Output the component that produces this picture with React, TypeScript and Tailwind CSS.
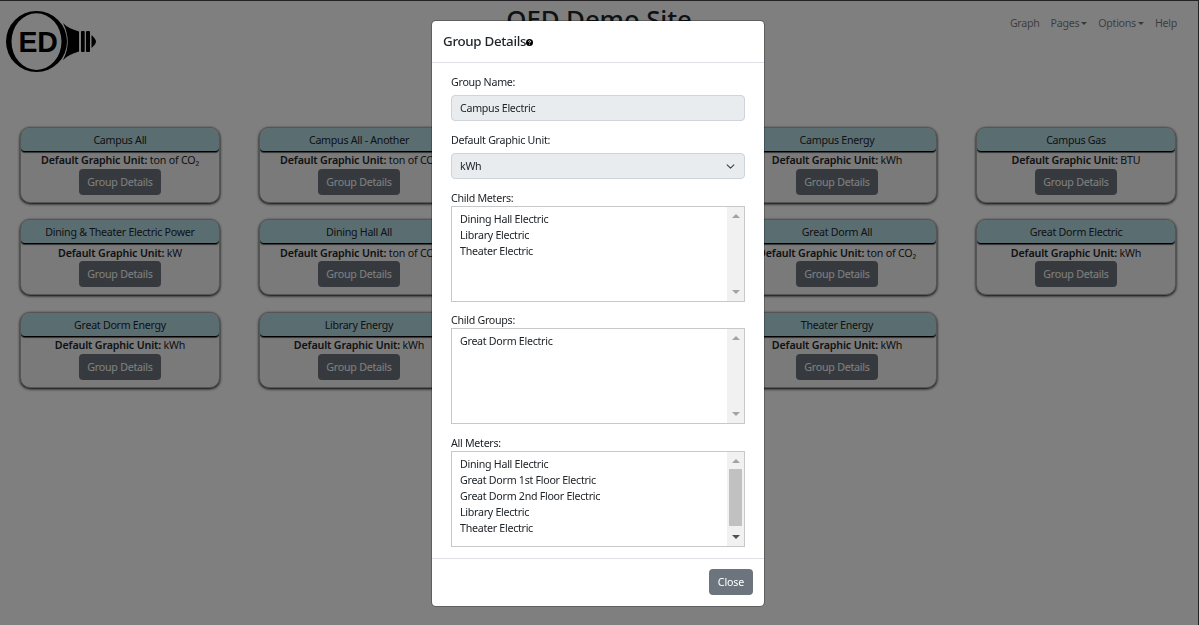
import React from "react";

type Group = { name: string; unit: string } | null;

const groups: Group[] = [
  { name: "Campus All", unit: "ton of CO₂" },
  { name: "Campus All - Another", unit: "ton of CO₂" },
  null,
  { name: "Campus Energy", unit: "kWh" },
  { name: "Campus Gas", unit: "BTU" },
  { name: "Dining & Theater Electric Power", unit: "kW" },
  { name: "Dining Hall All", unit: "ton of CO₂" },
  null,
  { name: "Great Dorm All", unit: "ton of CO₂" },
  { name: "Great Dorm Electric", unit: "kWh" },
  { name: "Great Dorm Energy", unit: "kWh" },
  { name: "Library Energy", unit: "kWh" },
  null,
  { name: "Theater Energy", unit: "kWh" },
];

function Logo() {
  return (
    <svg className="ml-[5px] mt-[9px] h-[62px] w-[91px]" viewBox="0 0 91 62">
      <path
        fillRule="evenodd"
        d="M31.500 1a30.500 30.500 0 1 0 0 61a30.500 30.500 0 1 0 0-61ZM31.500 3.300a25 28.300 0 1 1 0 56.600a25 28.300 0 1 1 0-56.600Z"
      />
      <path d="M58 13Q63 18.500 74 21.500V41.500Q63 44.500 58 50Q67.500 32 58 13Z" />
      <rect x="76" y="21" width="3.700" height="21" rx="1" />
      <rect x="81" y="21" width="4" height="21" rx="1" />
      <path d="M86.500 25Q91 29 91 31.500Q91 34 86.500 38Z" />
      <text x="13.500" y="41.500" fontFamily="Liberation Sans" fontWeight="700" fontSize="29" textLength="39" lengthAdjust="spacingAndGlyphs">
        ED
      </text>
    </svg>
  );
}

function Caret() {
  return <span className="mb-[2px] ml-[2px] inline-block border-x-[3px] border-t-[3px] border-x-transparent border-t-current align-middle" />;
}

function Card({ group }: { group: Group }) {
  if (!group) return <div />;
  return (
    <div className="h-[76px] w-[200px] overflow-hidden rounded-[10px] border border-[#aaa] bg-[#f4f4f4] text-center text-[#212529] shadow-[0_1px_3px_#000]">
      <div className="h-[24.4px]">
        <div className="h-[24px] rounded-b-[4px] border-b border-black bg-[#b5dce4] leading-[24px] shadow-[0_1px_1px_#666]">{group.name}</div>
      </div>
      <div className="h-[16.6px] leading-[17px]">
        <b className="font-semibold tracking-[-0.14px]">Default Graphic Unit:</b> <span className="tracking-[-0.2px]">{group.unit}</span>
      </div>
      <button className="mx-auto block h-[26px] w-[82px] rounded-[4px] bg-[#6c757d] tracking-[-0.25px] text-white">Group Details</button>
    </div>
  );
}

function ListBox({ label, items, scroll }: { label: string; items: string[]; scroll?: boolean }) {
  return (
    <div>
      <div className="h-[16px] leading-[16px]">{label}</div>
      <div className="flex h-[96px] justify-between border border-[#c8c8c8]">
        <ul className="pl-[8px] pt-[4px]">
          {items.map((i) => (
            <li key={i} className="h-[16px] leading-[16px]">{i}</li>
          ))}
        </ul>
        <div className="flex w-[17px] flex-col items-center justify-between bg-[#f1f1f1] py-[7px]">
          <span className="border-x-[4px] border-b-[4px] border-x-transparent border-b-[#a3a3a3]" />
          {scroll && <span className="mb-[3px] h-[57px] w-[13px] bg-[#c1c1c1]" />}
          <span className={scroll ? "border-x-[4px] border-t-[4px] border-x-transparent border-t-[#505050]" : "border-x-[4px] border-t-[4px] border-x-transparent border-t-[#a3a3a3]"} />
        </div>
      </div>
    </div>
  );
}

export default function App() {
  return (
    <div className="h-[625px] w-[1199px] overflow-hidden border-r border-t border-[#4a454a] bg-white font-['Noto_Sans',sans-serif] text-[10.67px] font-normal tracking-[-0.28px] text-[#212529]">
      <header className="grid h-[126px] grid-cols-3">
        <Logo />
        <h1 className="text-center text-[25.8px] font-medium leading-[36px] tracking-[-0.1px]">OED Demo Site</h1>
        <nav className="flex justify-end gap-[11px] pr-[21px] pt-[14px] leading-[16px] text-[#0000008c]">
          <span>Graph</span>
          <span>Pages<Caret /></span>
          <span>Options<Caret /></span>
          <span>Help</span>
        </nav>
      </header>
      <main className="grid grid-cols-[repeat(5,200px)] gap-x-[39px] gap-y-[16.3px] pl-[20px]">
        {groups.map((g, i) => (
          <Card key={i} group={g} />
        ))}
      </main>

      <div className="fixed inset-0 flex items-start justify-center bg-black/50 pr-[3px] pt-[20px]">
        <section className="flex h-[587px] w-[334px] flex-col rounded-[5px] border border-[#00000040] bg-white bg-clip-padding">
          <div className="flex h-[42px] items-center border-b border-[#dee2e6] pb-[2px] pl-[11px]">
            <h5 className="text-[13.33px] font-medium leading-[20px] tracking-[-0.3px]">Group Details</h5>
            <svg className="mt-[4px] h-[7px] w-[7px]" viewBox="0 0 14 14">
              <circle cx="7" cy="7" r="7" />
              <path d="M4.800 5.400Q5 3.500 7 3.500Q9.200 3.500 9.200 5.300Q9.200 6.500 7 7.500V8.200M7 9.700V11.200" fill="none" stroke="#fff" strokeWidth="1.900" />
            </svg>
          </div>
          <div className="flex h-[495px] flex-col px-[19px] pt-[11px]">
            <div className="h-[21px] leading-[16px]">Group Name:</div>
            <div className="h-[26px] rounded-[4px] border border-[#ced4da] bg-[#e9ecef] pl-[8px] leading-[24px]">Campus Electric</div>
            <div className="mt-[11px] h-[21px] leading-[16px]">Default Graphic Unit:</div>
            <div className="flex h-[26px] items-center justify-between rounded-[4px] border border-[#ced4da] bg-[#e9ecef] pl-[8px] pr-[9px]">
              kWh
              <svg className="h-[9px] w-[9px]" viewBox="0 0 16 16">
                <path d="m2 5 6 6 6-6" fill="none" stroke="#343a40" strokeWidth="1.800" strokeLinecap="round" strokeLinejoin="round" />
              </svg>
            </div>
            <div className="flex flex-col gap-[10.4px] pt-[11px]">
              <ListBox label="Child Meters:" items={["Dining Hall Electric", "Library Electric", "Theater Electric"]} />
              <ListBox label="Child Groups:" items={["Great Dorm Electric"]} />
              <ListBox
                label="All Meters:"
                items={["Dining Hall Electric", "Great Dorm 1st Floor Electric", "Great Dorm 2nd Floor Electric", "Library Electric", "Theater Electric"]}
                scroll
              />
            </div>
          </div>
          <div className="flex flex-1 items-center justify-end border-t border-[#dee2e6] pb-[1px] pr-[11px]">
            <button className="h-[26px] w-[44px] rounded-[4px] bg-[#6c757d] tracking-[-0.15px] text-white">Close</button>
          </div>
        </section>
      </div>
    </div>
  );
}
